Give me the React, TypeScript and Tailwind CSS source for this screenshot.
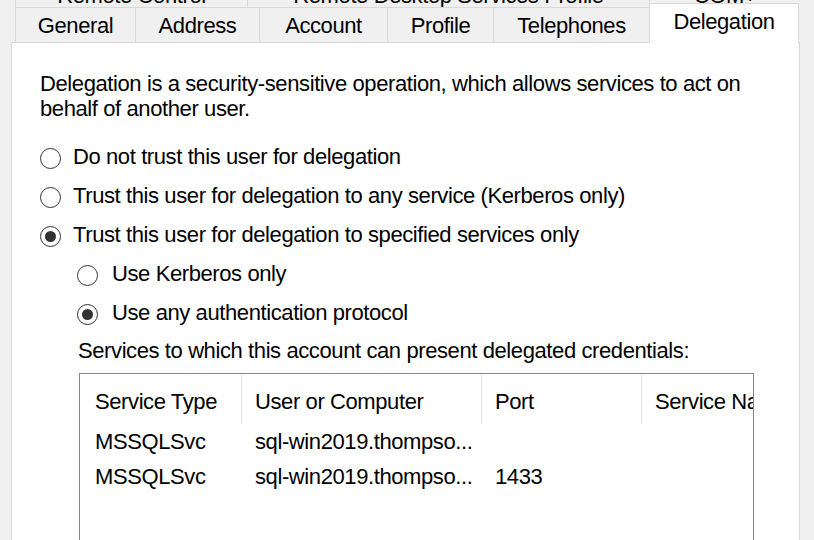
const topTabs = [
  { label: 'Remote Control', w: 'w-[232px]' },
  { label: 'Remote Desktop Services Profile', w: 'w-[402px]' },
  { label: 'COM+', w: 'w-[151px]' },
]

const tabs = [
  { label: 'General', w: 'w-[120px]' },
  { label: 'Address', w: 'w-[124px]' },
  { label: 'Account', w: 'w-[128px]' },
  { label: 'Profile', w: 'w-[106px]' },
  { label: 'Telephones', w: 'w-[156px]' },
]

const rows = [
  { type: 'MSSQLSvc', host: 'sql-win2019.thompso...', port: '' },
  { type: 'MSSQLSvc', host: 'sql-win2019.thompso...', port: '1433' },
]

function Radio({ checked }: { checked?: boolean }) {
  return (
    <span className="mt-[3px] flex h-[21px] w-[21px] shrink-0 items-center justify-center rounded-full border-[1.5px] border-[#333]">
      {checked && <span className="h-[11px] w-[11px] rounded-full bg-[#333]" />}
    </span>
  )
}

export default function App() {
  return (
    <div className="h-[540px] w-[814px] overflow-hidden bg-[#f0f0f0] font-['Liberation_Sans',Arial,sans-serif] text-[22px] tracking-[-0.4px] text-black">
      {/* back row of tabs, mostly cut off */}
      <div className="flex h-[7px] pl-[15px]">
        {topTabs.map((t) => (
          <div key={t.label} className={`h-[7px] overflow-hidden border-l border-[#d9d9d9] text-center ${t.w}`}>
            <div className="-mt-[17px] whitespace-nowrap leading-[25px]">{t.label}</div>
          </div>
        ))}
      </div>

      {/* front row */}
      <div className="flex h-[35px] items-end pl-[15px]">
        {tabs.map((t) => (
          <div
            key={t.label}
            className={`flex h-[35px] items-center justify-center border-l border-t border-[#d9d9d9] bg-[#f0f0f0] leading-[25px] ${t.w}`}
          >
            {t.label}
          </div>
        ))}
        <div className="relative -mb-px flex h-[40px] w-[150px] items-center justify-center border-x border-t border-[#d9d9d9] bg-white pb-[4px] leading-[25px]">
          Delegation
        </div>
      </div>

      <div className="ml-[11px] h-[500px] w-[789px] border border-[#d9d9d9] bg-white pl-[28px] pt-[28px]">
        <p className="w-[740px] leading-[25px]">
          Delegation is a security-sensitive operation, which allows services to act on behalf of another user.
        </p>

        <div className="mt-[16px] leading-[25px]">
          <div className="flex h-[39px] items-center gap-[12px]">
            <Radio />
            <span>Do not trust this user for delegation</span>
          </div>
          <div className="flex h-[39px] items-center gap-[12px]">
            <Radio />
            <span>Trust this user for delegation to any service (Kerberos only)</span>
          </div>
          <div className="flex h-[39px] items-center gap-[12px]">
            <Radio checked />
            <span>Trust this user for delegation to specified services only</span>
          </div>
          <div className="flex h-[39px] items-center gap-[14px] pl-[37px]">
            <Radio />
            <span>Use Kerberos only</span>
          </div>
          <div className="flex h-[39px] items-center gap-[14px] pl-[37px]">
            <Radio checked />
            <span>Use any authentication protocol</span>
          </div>
        </div>

        <p className="mt-[6px] pl-[38px] leading-[25px]">Services to which this account can present delegated credentials:</p>

        <div className="ml-[39px] mt-[10px] h-[200px] w-[675px] overflow-hidden border border-[#828790] bg-white leading-[25px]">
          <div className="flex h-[50px] whitespace-nowrap">
            <div className="flex w-[162px] shrink-0 items-center border-r border-[#e5e5e5] pl-[15px] pt-[4px]">Service Type</div>
            <div className="flex w-[240px] shrink-0 items-center border-r border-[#e5e5e5] pl-[13px] pt-[4px]">User or Computer</div>
            <div className="flex w-[160px] shrink-0 items-center border-r border-[#e5e5e5] pl-[13px] pt-[4px]">Port</div>
            <div className="flex w-[200px] shrink-0 items-center pl-[13px] pt-[4px]">Service Name</div>
          </div>
          {rows.map((r, i) => (
            <div key={i} className="flex h-[35px] items-center whitespace-nowrap">
              <div className="w-[162px] shrink-0 pl-[15px]">{r.type}</div>
              <div className="w-[240px] shrink-0 pl-[13px]">{r.host}</div>
              <div className="w-[160px] shrink-0 pl-[13px]">{r.port}</div>
            </div>
          ))}
        </div>
      </div>
    </div>
  )
}
